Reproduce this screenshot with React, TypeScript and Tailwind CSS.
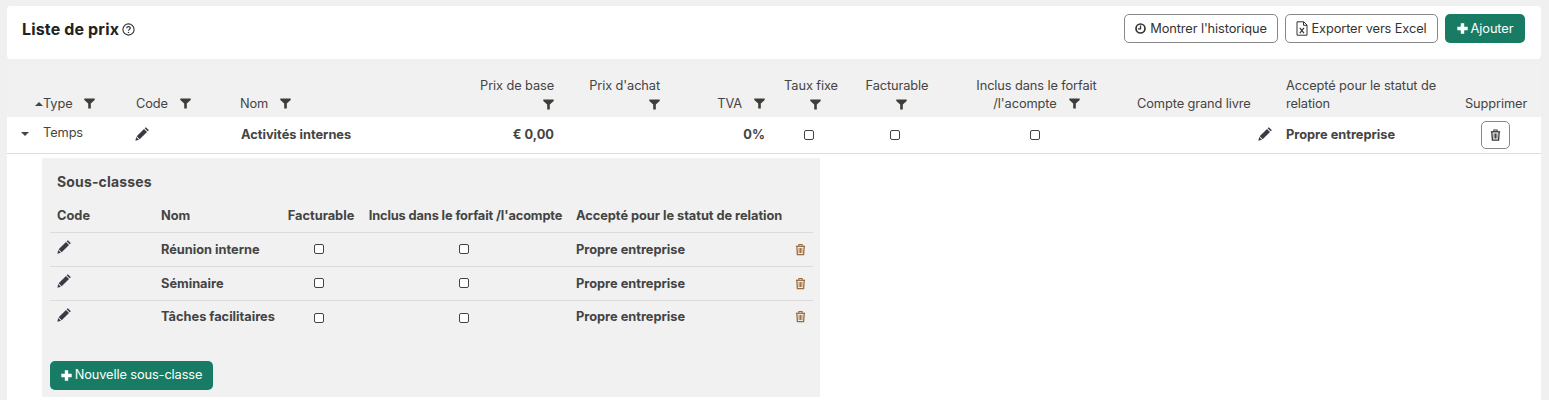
import React from 'react'

const PencilIcon = ({ className = '' }: { className?: string }) => (
  <svg viewBox="0 0 16 16" className={className} fill="#3a3a44">
    <path d="M11.6 1.2 14.8 4.4 13.5 5.7 10.3 2.5Z" />
    <path d="M9.6 3.2 12.8 6.4 5 14.2 1.8 11Z" />
    <path d="M1.3 11.8 4.2 14.7 0.4 15.6Z" />
  </svg>
)

const FilterIcon = ({ className = '' }: { className?: string }) => (
  <svg viewBox="0 0 11 11" className={`w-[11px] h-[11px] ${className}`} fill="#3f3d38">
    <path d="M0.3 0.5H10.7V2L6.8 5.6V10.5H4.2V5.6L0.3 2Z" />
  </svg>
)

const TrashIcon = ({ color = '#333', className = '' }: { color?: string; className?: string }) => (
  <svg viewBox="0 0 12 13" className={className} fill="none" stroke={color} strokeWidth="1.1">
    <path d="M1 3H11" strokeWidth="1.4" />
    <path d="M4.2 2.7V1.1H7.8V2.7" />
    <path d="M2 3.2 2.6 12H9.4L10 3.2" strokeWidth="1.4" />
    <path d="M4.5 4.8V10.4M6 4.8V10.4M7.5 4.8V10.4" strokeWidth="1" />
  </svg>
)

const PlusIcon = () => (
  <svg viewBox="0 0 11 11" className="w-[11px] h-[11px]" fill="#fff">
    <path d="M3.8 0.3H7.2V3.8H10.7V7.2H7.2V10.7H3.8V7.2H0.3V3.8H3.8Z" />
  </svg>
)

const ClockIcon = () => (
  <svg viewBox="0 0 12 12" className="w-[11px] h-[11px]" fill="none" stroke="#333">
    <circle cx="6" cy="6" r="4.9" strokeWidth="1.8" />
    <path d="M6 2.8V6.4H3.2" strokeWidth="1.4" />
  </svg>
)

const ExcelIcon = () => (
  <svg viewBox="0 0 12 15" className="w-[12px] h-[15px]" fill="none" stroke="#333" strokeWidth="1">
    <path d="M1 .8H7.8L11 4V14.2H1Z" />
    <path d="M7.5 1V4.3H11" />
    <path d="M3.8 6.8 8 12.2M8 6.8 3.8 12.2" strokeWidth="1.2" />
  </svg>
)

const HelpIcon = () => (
  <svg viewBox="0 0 13 13" className="w-[13px] h-[13px]" fill="none" stroke="#333">
    <circle cx="6.5" cy="6.5" r="5.6" strokeWidth="1.1" />
    <path d="M4.7 5.2C4.7 3 8.3 3 8.3 5.1 8.3 6.4 6.5 6.4 6.5 7.8" strokeWidth="1.2" />
    <path d="M6.5 8.9V10" strokeWidth="1.3" />
  </svg>
)

const Checkbox = () => (
  <span className="inline-block w-[10px] h-[10px] rounded-[2px] border border-[#444] bg-white align-middle" />
)

const subRows = ['Réunion interne', 'Séminaire', 'Tâches facilitaires']

function SubClasses() {
  return (
    <div className="ml-[35px] mt-[4px] w-[778px] h-[239px] bg-[#f1f1f1] px-[8px] pt-[15px]">
      <div className="pl-[7px] text-[14px] leading-[17px] font-bold tracking-[0.15px] text-[#444]">Sous-classes</div>
      <table className="w-[763px] table-fixed border-collapse mt-[10px] text-[12.8px] font-bold text-[#444]">
        <colgroup>
          <col className="w-[104px]" />
          <col className="w-[125px]" />
          <col className="w-[84px]" />
          <col className="w-[205px]" />
          <col className="w-[213px]" />
          <col className="w-[32px]" />
        </colgroup>
        <thead>
          <tr className="h-[33px] border-b border-[#dcdcdc]">
            <th className="pl-[7px] text-left font-bold">Code</th>
            <th className="pl-[7px] text-left font-bold">Nom</th>
            <th className="text-center font-bold whitespace-nowrap">Facturable</th>
            <th className="text-center font-bold tracking-[-0.12px] whitespace-nowrap">Inclus dans le forfait /l'acompte</th>
            <th className="pl-[8px] text-left font-bold tracking-[-0.03px] whitespace-nowrap">Accepté pour le statut de relation</th>
            <th />
          </tr>
        </thead>
        <tbody>
          {subRows.map((name, i) => (
            <tr key={name} className={`h-[34px] ${i < 2 ? 'border-b border-[#dcdcdc]' : ''}`}>
              <td className="pl-[7px] pb-[7px]">
                <PencilIcon className="w-[15px] h-[15px]" />
              </td>
              <td className={`pl-[7px] whitespace-nowrap ${i === 2 ? 'pb-[2px]' : ''}`}>{name}</td>
              <td className="text-center pr-[4px] pb-[2px]">
                <Checkbox />
              </td>
              <td className="text-center pr-[4px] pb-[2px]">
                <Checkbox />
              </td>
              <td className={`pl-[8px] ${i === 2 ? 'pb-[2px]' : ''}`}>Propre entreprise</td>
              <td className={`pl-[14px] ${i === 2 ? 'pb-[3px]' : 'pb-[1px]'}`}>
                <TrashIcon color="#9a6a3c" className="w-[11px] h-[13px]" />
              </td>
            </tr>
          ))}
        </tbody>
      </table>
      <button className="mt-[26px] h-[29px] w-[163px] flex items-center justify-center gap-[3px] rounded-[5px] bg-[#187c64] text-[12.8px] font-normal tracking-[-0.1px] text-white">
        <PlusIcon />
        Nouvelle sous-classe
      </button>
    </div>
  )
}

export default function App() {
  return (
    <div
      className="h-[400px] overflow-hidden bg-[#f0f0f0] pl-[7px] pr-[8px] pt-[6px] text-[#444]"
      style={{ fontFamily: 'Inter, sans-serif' }}
    >
      <div className="h-[53px] flex items-start justify-between bg-white rounded-[4px] pl-[15px] pr-[16px] pt-[8px]">
        <div className="flex items-center gap-[3px] h-[29px] pt-[1px]">
          <h1 className="text-[16px] font-bold tracking-[0.15px] text-[#222]">Liste de prix</h1>
          <HelpIcon />
        </div>
        <div className="flex gap-[7px] text-[12.8px] tracking-[-0.1px] text-[#333]">
          <button className="h-[29px] w-[154px] flex items-center justify-center gap-[4px] rounded-[5px] border border-[#888] bg-white">
            <ClockIcon />
            Montrer l'historique
          </button>
          <button className="h-[29px] w-[153px] flex items-center justify-center gap-[3px] rounded-[5px] border border-[#888] bg-white">
            <ExcelIcon />
            Exporter vers Excel
          </button>
          <button className="h-[29px] w-[80px] flex items-center justify-center gap-[3px] rounded-[5px] bg-[#187c64] font-normal text-white">
            <PlusIcon />
            Ajouter
          </button>
        </div>
      </div>

      <div className="mt-[7px] bg-white h-[340px]">
        <table className="w-[1534px] table-fixed border-collapse text-[12.8px] text-[#444]">
          <colgroup>
            <col className="w-[122px]" />
            <col className="w-[104px]" />
            <col className="w-[227px]" />
            <col className="w-[100px]" />
            <col className="w-[106px]" />
            <col className="w-[105px]" />
            <col className="w-[80px]" />
            <col className="w-[92px]" />
            <col className="w-[187px]" />
            <col className="w-[150px]" />
            <col className="w-[179px]" />
            <col className="w-[82px]" />
          </colgroup>
          <thead>
            <tr className="h-[51px] bg-[#f1f1f1] align-bottom font-normal leading-[18px] tracking-[-0.1px]">
              <th className="pl-[28px] pb-[4px] text-left font-normal">
                <span className="flex items-center">
                  <span className="w-0 h-0 border-x-[4px] border-x-transparent border-b-[4px] border-b-[#444]" />
                  Type
                  <FilterIcon className="ml-[11px] mb-[2px]" />
                </span>
              </th>
              <th className="pl-[7px] pb-[4px] text-left font-normal">
                <span className="flex items-center">
                  Code
                  <FilterIcon className="ml-[12px] mb-[2px]" />
                </span>
              </th>
              <th className="pl-[7px] pb-[4px] text-left font-normal">
                <span className="flex items-center">
                  Nom
                  <FilterIcon className="ml-[12px] mb-[2px]" />
                </span>
              </th>
              <th className="pr-[6px] pb-[4px] text-right font-normal whitespace-nowrap">
                Prix de base
                <span className="flex justify-end pt-[4px] pb-[3px]">
                  <FilterIcon />
                </span>
              </th>
              <th className="pr-[6px] pb-[4px] text-right font-normal whitespace-nowrap">
                Prix d'achat
                <span className="flex justify-end pt-[4px] pb-[3px]">
                  <FilterIcon />
                </span>
              </th>
              <th className="pr-[6px] pb-[4px] font-normal">
                <span className="flex items-center justify-end">
                  TVA
                  <FilterIcon className="ml-[12px] mb-[2px]" />
                </span>
              </th>
              <th className="pb-[4px] text-center font-normal whitespace-nowrap">
                Taux fixe
                <span className="flex justify-center pl-[8px] pt-[4px] pb-[3px]">
                  <FilterIcon />
                </span>
              </th>
              <th className="pb-[4px] text-center font-normal whitespace-nowrap">
                Facturable
                <span className="flex justify-center pl-[8px] pt-[4px] pb-[3px]">
                  <FilterIcon />
                </span>
              </th>
              <th className="pb-[4px] text-center font-normal whitespace-nowrap">
                Inclus dans le forfait
                <span className="flex items-center justify-center">
                  /l'acompte
                  <FilterIcon className="ml-[12px] mb-[2px]" />
                </span>
              </th>
              <th className="pl-[7px] pb-[4px] text-left font-normal whitespace-nowrap">Compte grand livre</th>
              <th className="pl-[6px] pb-[4px] text-left font-normal">Accepté pour le statut de relation</th>
              <th className="pl-[6px] pb-[4px] text-left font-normal">Supprimer</th>
            </tr>
          </thead>
          <tbody>
            <tr className="h-[36px] border-b border-[#dcdcdc] font-bold">
              <td className="pl-[14px] pb-[4px] font-normal tracking-[-0.1px]">
                <span className="flex items-center">
                  <span className="w-0 h-0 mt-[3px] border-x-[4px] border-x-transparent border-t-[4px] border-t-[#444] mr-[14px]" />
                  Temps
                </span>
              </td>
              <td className="pl-[6px] pb-[3px]">
                <PencilIcon className="w-[15px] h-[15px]" />
              </td>
              <td className="pl-[8px]">Activités internes</td>
              <td className="pr-[6px] text-right">€ 0,00</td>
              <td />
              <td className="pr-[6px] text-right">0%</td>
              <td className="text-center pr-[5px] pb-[1px]">
                <Checkbox />
              </td>
              <td className="text-center pr-[5px] pb-[1px]">
                <Checkbox />
              </td>
              <td className="text-center pr-[3px] pb-[1px]">
                <Checkbox />
              </td>
              <td className="pr-[7px] pb-[2px]">
                <span className="flex justify-end">
                  <PencilIcon className="w-[15px] h-[15px]" />
                </span>
              </td>
              <td className="pl-[6px]">Propre entreprise</td>
              <td className="pl-[22px]">
                <button className="flex w-[29px] h-[28px] items-center justify-center rounded-[5px] border border-[#888] bg-white">
                  <TrashIcon className="w-[11px] h-[12px]" />
                </button>
              </td>
            </tr>
            <tr>
              <td colSpan={12} className="p-0">
                <SubClasses />
              </td>
            </tr>
          </tbody>
        </table>
      </div>
    </div>
  )
}
